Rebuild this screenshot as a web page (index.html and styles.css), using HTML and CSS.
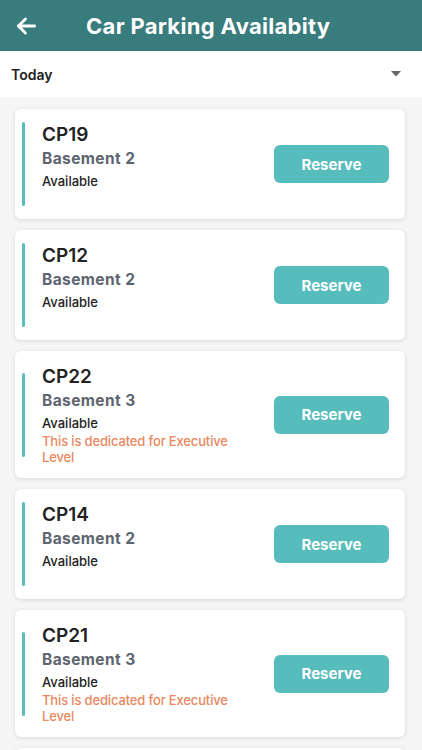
FILE: index.html
```html
<!DOCTYPE html>
<html lang="en">
<head>
    <meta charset="UTF-8">
    <meta name="viewport" content="width=device-width, initial-scale=1.0">
    <title>Car Parking Availabity</title>
    <link rel="stylesheet" href="styles.css">
</head>
<body>
    <header class="topbar">
        <button class="back" aria-label="Back">
            <svg width="26" height="26" viewBox="0 0 24 24" fill="none" stroke="#fff" stroke-width="2.6" stroke-linecap="round" stroke-linejoin="round">
                <path d="M20 12H5"/>
                <path d="M11.5 5.5L5 12l6.5 6.5"/>
            </svg>
        </button>
        <h1 class="title">Car Parking Availabity</h1>
    </header>

    <div class="picker">
        <span>Today</span>
        <svg width="10" height="6" viewBox="0 0 10 6"><polygon points="0,0 10,0 5,5.5" fill="#666"/></svg>
    </div>

    <div class="list">
        <div class="card">
            <div class="info">
                <div class="bar"></div>
                <div class="text">
                    <div class="code">CP19</div>
                    <div class="level">Basement 2</div>
                    <div class="status">Available</div>
                </div>
            </div>
            <button class="reserve">Reserve</button>
        </div>

        <div class="card">
            <div class="info">
                <div class="bar"></div>
                <div class="text">
                    <div class="code">CP12</div>
                    <div class="level">Basement 2</div>
                    <div class="status">Available</div>
                </div>
            </div>
            <button class="reserve">Reserve</button>
        </div>

        <div class="card">
            <div class="info">
                <div class="bar"></div>
                <div class="text">
                    <div class="code">CP22</div>
                    <div class="level">Basement 3</div>
                    <div class="status">Available</div>
                    <div class="note">This is dedicated for Executive Level</div>
                </div>
            </div>
            <button class="reserve">Reserve</button>
        </div>

        <div class="card">
            <div class="info">
                <div class="bar"></div>
                <div class="text">
                    <div class="code">CP14</div>
                    <div class="level">Basement 2</div>
                    <div class="status">Available</div>
                </div>
            </div>
            <button class="reserve">Reserve</button>
        </div>

        <div class="card">
            <div class="info">
                <div class="bar"></div>
                <div class="text">
                    <div class="code">CP21</div>
                    <div class="level">Basement 3</div>
                    <div class="status">Available</div>
                    <div class="note">This is dedicated for Executive Level</div>
                </div>
            </div>
            <button class="reserve">Reserve</button>
        </div>

        <div class="card">
            <div class="info">
                <div class="bar"></div>
                <div class="text">
                    <div class="code">CP18</div>
                    <div class="level">Basement 2</div>
                    <div class="status">Available</div>
                </div>
            </div>
            <button class="reserve">Reserve</button>
        </div>
    </div>
</body>
</html>
```

FILE: styles.css
```css
* {
    margin: 0;
    padding: 0;
    box-sizing: border-box;
}

body {
    font-family: Inter, "Open Sans", sans-serif;
    background-color: #f5f5f5;
    overflow: hidden;
}

.topbar {
    background-color: #397c7d;
    height: 51px;
    display: flex;
    align-items: center;
    padding-left: 13px;
}

.back {
    background: none;
    border: none;
    display: flex;
    cursor: pointer;
}

.title {
    color: #fff;
    font-size: 22px;
    font-weight: 700;
    margin-left: 47px;
    letter-spacing: 0.3px;
}

.picker {
    background-color: #fff;
    height: 46px;
    display: flex;
    align-items: center;
    justify-content: space-between;
    padding: 0 21px 0 11px;
    font-size: 14px;
    font-weight: 600;
    color: #222;
}

.list {
    padding: 12px 17px 0 15px;
    display: flex;
    flex-direction: column;
    gap: 11px;
}

.card {
    background-color: #fff;
    border-radius: 6px;
    box-shadow: 0 1px 4px rgba(0, 0, 0, 0.12);
    padding: 13px 16px 13px 7px;
    display: flex;
    align-items: center;
    justify-content: space-between;
}

.info {
    display: flex;
    align-items: center;
    gap: 17px;
    min-height: 84px;
}

.bar {
    width: 3px;
    height: 84px;
    background-color: #58bdbd;
    border-radius: 2px;
}

.text {
    align-self: flex-start;
    width: 210px;
}

.code {
    font-size: 19px;
    font-weight: 600;
    color: #222;
    line-height: 25px;
}

.level {
    font-size: 15.5px;
    font-weight: 700;
    color: #5e6570;
    line-height: 23px;
    letter-spacing: 0.4px;
}

.status {
    font-size: 13px;
    font-weight: 500;
    color: #1e1e1e;
    line-height: 21px;
    padding-top: 1px;
}

.note {
    font-size: 13px;
    font-weight: 500;
    color: #ea8760;
    line-height: 15.5px;
    letter-spacing: -0.15px;
}

.reserve {
    width: 115px;
    height: 38px;
    border: none;
    border-radius: 6px;
    background-color: #57bcbc;
    color: #fff;
    font-family: inherit;
    font-size: 15px;
    font-weight: 700;
    cursor: pointer;
}
```
